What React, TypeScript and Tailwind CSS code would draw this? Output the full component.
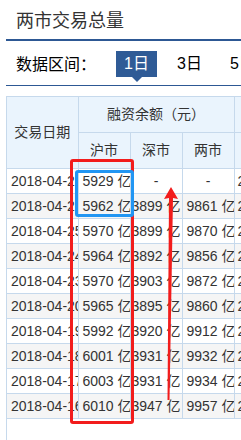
import React from 'react';

const rows = [
  { date: '2018-04-27', sh: '5929 亿', sz: '-', all: '-' },
  { date: '2018-04-26', sh: '5962 亿', sz: '3899 亿', all: '9861 亿' },
  { date: '2018-04-25', sh: '5970 亿', sz: '3899 亿', all: '9870 亿' },
  { date: '2018-04-24', sh: '5964 亿', sz: '3892 亿', all: '9856 亿' },
  { date: '2018-04-23', sh: '5970 亿', sz: '3903 亿', all: '9872 亿' },
  { date: '2018-04-20', sh: '5965 亿', sz: '3895 亿', all: '9860 亿' },
  { date: '2018-04-19', sh: '5992 亿', sz: '3920 亿', all: '9912 亿' },
  { date: '2018-04-18', sh: '6001 亿', sz: '3931 亿', all: '9932 亿' },
  { date: '2018-04-17', sh: '6003 亿', sz: '3931 亿', all: '9934 亿' },
  { date: '2018-04-16', sh: '6010 亿', sz: '3947 亿', all: '9957 亿' },
];

const font = { fontFamily: '"Liberation Sans", "Noto Sans CJK SC", sans-serif' };

export default function App() {
  return (
    <div className="relative w-[241px] h-[440px] overflow-hidden bg-white text-[#333]" style={font}>
      {/* title */}
      <div className="h-[39px] pl-[16px] pt-[9px] text-[18px] leading-[24px] text-[#333]">
        两市交易总量
      </div>
      <div className="ml-[6px] h-[2px] bg-[#2d5894]" />

      {/* range tabs */}
      <div className="ml-[6px] h-[45px] flex items-start border-b border-[#2d5894]">
        <div className="shrink-0 pl-[10px] pt-[14px] w-[110px] text-[16px] leading-[20px] text-black whitespace-nowrap">数据区间：</div>
        <div className="shrink-0 relative mt-[10px] w-[41px] h-[26px] bg-[#2f5b96] text-white text-[16px] leading-[26px] text-center">
          1日
          <div className="absolute left-[16px] top-[26px] w-0 h-0 border-l-[5px] border-r-[5px] border-t-[5px] border-l-transparent border-r-transparent border-t-[#2f5b96]" />
        </div>
        <div className="shrink-0 ml-[20px] mt-[10px] text-[16px] leading-[26px] text-black whitespace-nowrap">3日</div>
        <div className="shrink-0 ml-[28px] mt-[10px] text-[16px] leading-[26px] text-black whitespace-nowrap">5日</div>
      </div>

      {/* table */}
      <div className="ml-[6px] mt-[10px] h-[400px] border-l border-[#c6d9ec] overflow-hidden">
        <table className="table-fixed border-collapse w-[300px] text-[14px]">
          <colgroup>
            <col className="w-[71px]" />
            <col className="w-[52px]" />
            <col className="w-[52px]" />
            <col className="w-[52px]" />
            <col className="w-[73px]" />
          </colgroup>
          <thead>
            <tr className="h-[36px] bg-[#eaf4fd]">
              <th rowSpan={2} className="border border-l-0 border-[#c6d9ec] font-normal text-center">交易日期</th>
              <th colSpan={3} className="border border-[#c6d9ec] font-normal text-center">融资余额（元）</th>
              <th className="border border-[#c6d9ec] font-normal" />
            </tr>
            <tr className="h-[36px] bg-[#eaf4fd]">
              <th className="border border-[#c6d9ec] font-normal text-center">沪市</th>
              <th className="border border-[#c6d9ec] font-normal text-center">深市</th>
              <th className="border border-[#c6d9ec] font-normal text-center">两市</th>
              <th className="border border-[#c6d9ec] font-normal" />
            </tr>
          </thead>
          <tbody>
            {rows.map((r, i) => (
              <tr key={r.date} className={i % 2 === 1 ? 'h-[25px] bg-[#f5f5f5]' : 'h-[25px] bg-white'}>
                <td className="border border-l-0 border-[#c6d9ec] pl-[4px] whitespace-nowrap overflow-hidden">{r.date}</td>
                <td className="border border-[#c6d9ec] pl-[4px] whitespace-nowrap overflow-hidden">{r.sh}</td>
                <td className={r.sz === '-' ? 'border border-[#c6d9ec] text-center' : 'border border-[#c6d9ec] pl-[1px] whitespace-nowrap overflow-hidden'}>{r.sz}</td>
                <td className={r.all === '-' ? 'border border-[#c6d9ec] text-center' : 'border border-[#c6d9ec] pl-[4px] whitespace-nowrap overflow-hidden'}>{r.all}</td>
                <td className="border border-[#c6d9ec] pl-[3px] whitespace-nowrap overflow-hidden">2</td>
              </tr>
            ))}
          </tbody>
        </table>
      </div>

      {/* annotations */}
      <div className="absolute left-[70px] top-[159px] w-[64px] h-[265px] border-[3px] border-[#f21c1c] rounded-[3px]" />
      <div className="absolute left-[75px] top-[170px] w-[59px] h-[47px] border-[3px] border-[#2196f3] rounded-[3px]" />
      <svg className="absolute left-[160px] top-[185px]" width="22" height="220" viewBox="0 0 22 220">
        <polygon points="11,2 18,14 13,13 9.5,215 7.5,215 9,13 4,14" fill="#f21c1c" />
      </svg>
    </div>
  );
}
